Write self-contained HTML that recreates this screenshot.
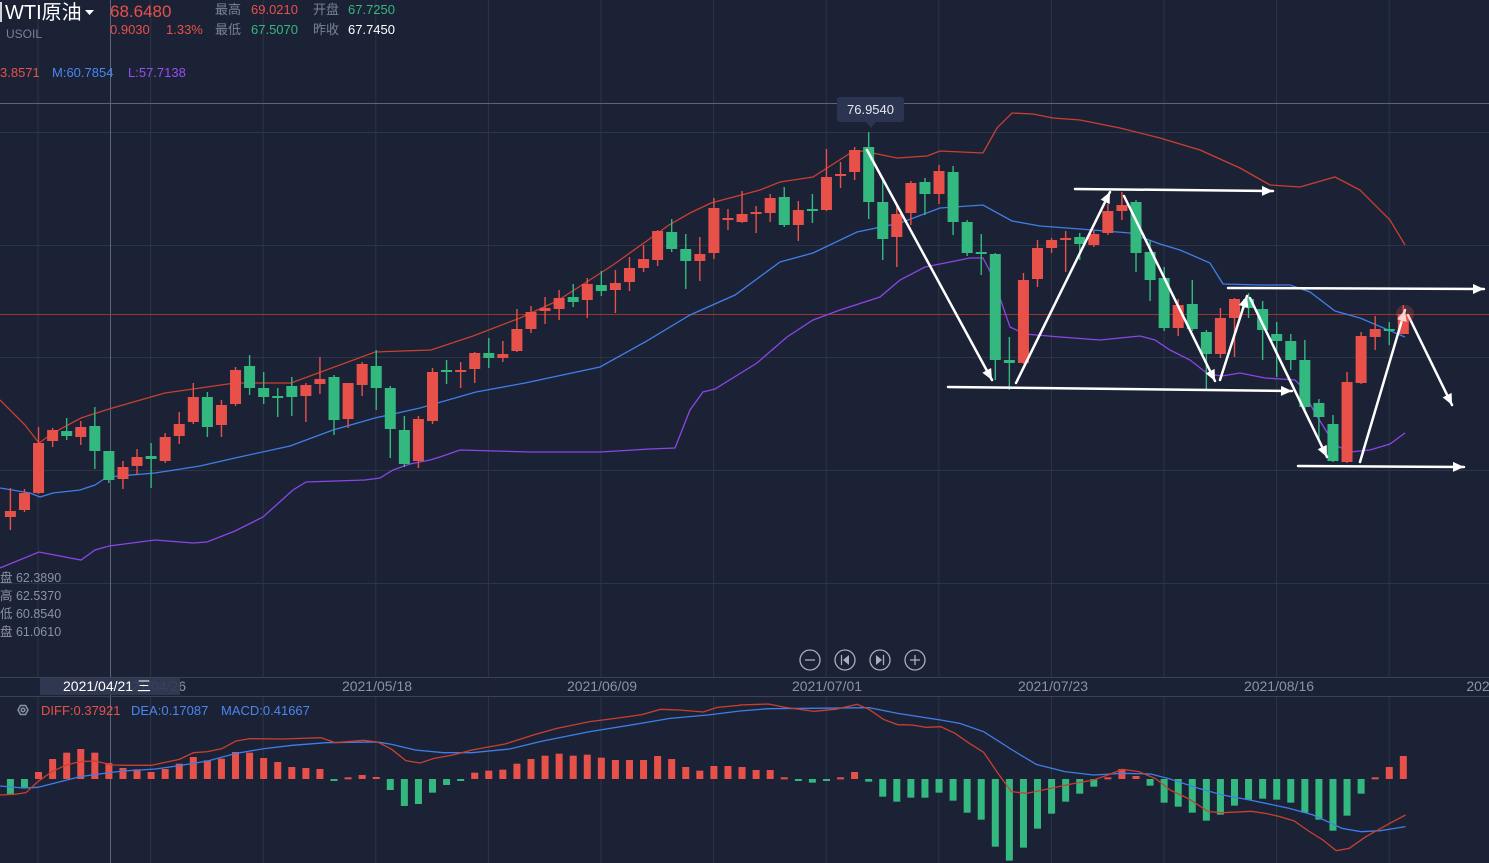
<!DOCTYPE html>
<html><head><meta charset="utf-8"><style>
html,body{margin:0;padding:0;background:#1c2235;width:1489px;height:863px;overflow:hidden;font-family:"Liberation Sans","Noto Sans CJK SC",sans-serif}
svg{position:absolute;left:0;top:0}
</style></head><body>
<svg id="s" width="1489" height="863" xmlns="http://www.w3.org/2000/svg">
<rect width="1489" height="863" fill="#1c2235"/>
<g id="grid" stroke="#2c3447" stroke-width="1"></g>
<line x1="0" y1="103.5" x2="1489" y2="103.5" stroke="#5d6478"/>
<line x1="110.5" y1="0" x2="110.5" y2="863" stroke="#5d6478"/>
<line x1="0" y1="314.5" x2="1489" y2="314.5" stroke="#9a3530"/>
<line x1="0" y1="677.5" x2="1489" y2="677.5" stroke="#3a4256"/>
<line x1="0" y1="696.5" x2="1489" y2="696.5" stroke="#3a4256"/>
<g id="bands" fill="none" stroke-width="1.3"></g>
<g id="candles"></g>
<g id="macd"></g>
<g id="arrows" stroke="#fff" fill="#fff" stroke-linecap="round"></g>
<circle cx="1405" cy="314" r="9" fill="#e8504a" opacity="0.25"/>
<rect x="837" y="97" width="67" height="25" rx="3" fill="#2b3450"/>
<polygon points="866,122 876,122 871,128" fill="#2b3450"/>
<text x="870.5" y="114" fill="#e6e8ee" font-size="13" text-anchor="middle">76.9540</text>
<rect x="0" y="2" width="2" height="20" fill="#cfd3dc"/>
<text x="5" y="19" fill="#fff" font-size="20">WTI原油</text>
<polygon points="85,10 94,10 89.5,15" fill="#fff"/>
<text x="6" y="38" fill="#7a8296" font-size="12">USOIL</text>
<text x="110" y="17" fill="#e8504a" font-size="17">68.6480</text>
<text x="110" y="34" fill="#e8504a" font-size="13">0.9030</text>
<text x="166" y="34" fill="#e8504a" font-size="13">1.33%</text>
<text x="215" y="14" fill="#7a8296" font-size="13">最高</text>
<text x="251" y="14" fill="#e8504a" font-size="13">69.0210</text>
<text x="313" y="14" fill="#7a8296" font-size="13">开盘</text>
<text x="348" y="14" fill="#33b97f" font-size="13">67.7250</text>
<text x="215" y="34" fill="#7a8296" font-size="13">最低</text>
<text x="251" y="34" fill="#33b97f" font-size="13">67.5070</text>
<text x="313" y="34" fill="#7a8296" font-size="13">昨收</text>
<text x="348" y="34" fill="#fff" font-size="13">67.7450</text>
<text x="0" y="77" fill="#e8504a" font-size="13">3.8571</text>
<text x="52" y="77" fill="#4a86f0" font-size="13">M:60.7854</text>
<text x="128" y="77" fill="#9a4df0" font-size="13">L:57.7138</text>
<g fill="#8a92a6" font-size="12.5">
<text x="0" y="582">盘 62.3890</text>
<text x="0" y="600">高 62.5370</text>
<text x="0" y="618">低 60.8540</text>
<text x="0" y="636">盘 61.0610</text>
</g>
<g stroke="#a8afbf" fill="none" stroke-width="1.3">
<circle cx="810" cy="660" r="10"/><line x1="805" y1="660" x2="815" y2="660"/>
<circle cx="845" cy="660" r="10"/><line x1="841.5" y1="655" x2="841.5" y2="665"/><polygon points="849,655 849,665 843,660" fill="#a8afbf" stroke="none"/>
<circle cx="880" cy="660" r="10"/><line x1="883.5" y1="655" x2="883.5" y2="665"/><polygon points="876,655 876,665 882,660" fill="#a8afbf" stroke="none"/>
<circle cx="915" cy="660" r="10"/><line x1="910" y1="660" x2="920" y2="660"/><line x1="915" y1="655" x2="915" y2="665"/>
</g>
<g fill="#8a92a6" font-size="14" text-anchor="middle">
<text x="151" y="691">2021/04/26</text>
<text x="377" y="691">2021/05/18</text>
<text x="602" y="691">2021/06/09</text>
<text x="827" y="691">2021/07/01</text>
<text x="1053" y="691">2021/07/23</text>
<text x="1279" y="691">2021/08/16</text>
<text x="1478" y="691">202</text>
</g>
<rect x="40" y="678" width="140" height="17" fill="#323a52" opacity="0.92"/>
<text x="63" y="691" fill="#fff" font-size="14">2021/04/21 三</text>
<g stroke="#8a92a6" fill="none" stroke-width="1.5"><polygon points="18,710 20.5,705.5 25.5,705.5 28,710 25.5,714.5 20.5,714.5"/><circle cx="23" cy="710" r="1.8"/></g>
<text x="41" y="715" fill="#e8504a" font-size="13">DIFF:0.37921</text>
<text x="131" y="715" fill="#4a86f0" font-size="13">DEA:0.17087</text>
<text x="221" y="715" fill="#4a86f0" font-size="13">MACD:0.41667</text>
</svg>
<script>
var NS="http://www.w3.org/2000/svg";
function el(p,t,a){var e=document.createElementNS(NS,t);for(var k in a)e.setAttribute(k,a[k]);p.appendChild(e);return e;}
var g=document.getElementById('grid');
for(var i=0;i<13;i++){var x=38+112.6*i;el(g,'line',{x1:x,y1:0,x2:x,y2:677});el(g,'line',{x1:x,y1:697,x2:x,y2:863});}
[132,245,357,470,583].forEach(function(y){el(g,'line',{x1:0,y1:y+.5,x2:1489,y2:y+.5});});
var R="#e8504a",G="#33b97f";
var C=[[10,511,517,488,530,R],[25,493,510,489,512,R],[39,443,493,427,494,R],[53,430,441,428,447,R],[67,431,436,418,440,G],[81,427,437,421,445,R],[95,426,451,407,469,G],[109,451,480,451,483,G],[123,467,479,461,489,R],[137,457,466,449,475,R],[151,456,459,443,488,G],[165,437,461,433,463,R],[179,424,436,412,444,R],[193,397,422,383,424,R],[207,397,427,392,437,G],[221,405,425,400,437,R],[235,370,404,367,406,R],[249,366,388,355,395,G],[263,388,397,372,404,G],[277,396,397,388,417,G],[291,386,397,377,416,G],[305,385,396,383,422,R],[319,379,384,357,394,R],[333,377,420,375,435,G],[347,383,419,383,428,R],[361,364,385,362,396,R],[375,366,388,350,410,G],[389,388,429,386,458,G],[403,430,464,416,467,G],[417,419,461,416,468,R],[431,372,421,368,424,R],[445,370,372,360,384,G],[459,370,372,362,388,R],[473,353,369,352,383,R],[487,353,358,338,368,G],[501,354,358,341,362,R],[515,329,351,309,352,R],[529,312,329,306,333,R],[543,308,311,297,324,R],[557,298,309,290,320,R],[571,297,302,284,307,G],[585,284,300,278,318,R],[599,285,291,271,296,G],[613,283,290,270,313,R],[627,268,282,257,291,R],[641,259,268,245,272,R],[655,231,260,230,266,R],[669,232,249,219,252,G],[683,249,261,234,289,G],[697,254,261,237,281,R],[711,208,253,198,259,R],[725,218,219,209,230,R],[739,214,222,191,223,R],[753,212,213,206,233,R],[767,198,213,194,222,R],[781,197,225,187,227,G],[796,210,225,201,241,R],[810,209,210,194,223,G],[824,177,210,149,211,R],[838,174,176,162,188,R],[852,150,172,147,180,R],[866,147,202,132,219,G],[880,202,239,178,260,G],[894,214,237,205,267,R],[908,183,213,181,225,R],[922,182,194,178,215,G],[936,171,194,165,204,R],[950,172,222,166,235,G],[964,222,253,220,256,G],[978,252,254,234,275,G],[992,254,360,253,380,G],[1006,360,363,337,390,G],[1020,280,363,273,364,R],[1034,248,279,240,287,R],[1048,240,248,238,253,R],[1062,238,239,231,272,R],[1076,237,244,233,260,G],[1090,234,245,231,247,R],[1104,211,233,204,235,R],[1118,205,211,192,220,R],[1132,202,253,200,272,G],[1146,252,280,240,301,G],[1160,278,328,267,331,G],[1174,305,328,299,336,R],[1188,304,329,280,331,G],[1202,332,354,330,389,G],[1216,318,354,308,358,R],[1230,299,318,298,357,R],[1244,299,308,293,318,G],[1258,309,330,301,360,G],[1272,334,341,322,377,G],[1286,341,360,334,370,G],[1300,360,407,340,410,G],[1314,403,417,399,440,G],[1328,424,461,415,462,G],[1343,382,462,372,463,R],[1357,336,383,332,384,R],[1371,329,337,316,350,R],[1385,329,331,322,345,G],[1399,314,334,305,334,R]];
var cg=document.getElementById('candles');
C.forEach(function(c,i){var x=10.4+14.07*i;el(cg,'line',{x1:x,y1:c[3],x2:x,y2:c[4],stroke:c[5],'stroke-width':1.4});var h=Math.max(c[2]-c[1],2);el(cg,'rect',{x:x-5.5,y:c[1],width:11,height:h,fill:c[5]});});
function pl(gr,pts,col,w){el(gr,'polyline',{points:pts.map(function(p){return p.join(',')}).join(' '),stroke:col,'stroke-width':w||1.3,fill:'none'});}
var b=document.getElementById('bands');
pl(b,[[0,400],[25,425],[39,443],[53,433],[81,418],[109,409],[165,393],[235,383],[291,383],[375,352],[431,350],[473,336],[520,318],[557,301],[613,265],[669,225],[690,213],[711,203],[760,190],[780,182],[813,177],[852,152],[863,151],[897,158],[927,156],[940,151],[983,153],[997,128],[1012,113],[1033,114],[1053,118],[1080,120],[1120,128],[1160,138],[1200,150],[1240,168],[1270,185],[1300,187],[1335,177],[1360,190],[1390,220],[1405,245]],"#c8402f");
pl(b,[[0,488],[30,493],[40,497],[53,493],[80,490],[95,485],[107,477],[155,473],[200,466],[235,458],[290,446],[333,430],[375,418],[420,408],[476,392],[525,383],[600,367],[645,342],[690,315],[735,295],[780,262],[813,253],[857,232],[900,223],[940,208],[983,205],[1012,221],[1040,226],[1080,229],[1130,233],[1160,244],[1180,250],[1210,263],[1223,284],[1260,285],[1290,285],[1310,292],[1335,311],[1360,318],[1405,337]],"#3f7ee8");
pl(b,[[0,568],[39,552],[81,560],[95,550],[109,546],[155,540],[193,543],[207,542],[235,531],[263,517],[293,490],[306,482],[365,480],[380,478],[393,470],[410,464],[430,460],[440,457],[460,450],[530,452],[600,452],[650,449],[675,448],[690,410],[703,392],[715,389],[757,363],[787,337],[813,320],[840,310],[880,297],[900,280],[925,267],[970,258],[983,258],[992,275],[1010,327],[1025,334],[1060,337],[1100,340],[1140,336],[1155,340],[1170,350],[1190,360],[1208,374],[1222,376],[1240,373],[1265,378],[1295,380],[1300,385],[1315,413],[1335,445],[1350,452],[1370,450],[1390,444],[1405,433]],"#8b45e6");
var M=[283,263,216,177,158,147,158,189,204,208,216,207,191,171,181,176,156,158,174,186,201,204,207,242,232,225,231,270,318,312,278,255,243,218,212,209,191,177,167,161,167,164,173,180,180,180,168,177,201,212,198,198,201,210,210,232,242,248,242,232,216,245,290,305,293,293,278,302,338,359,440,482,443,386,341,305,281,260,232,207,228,257,308,320,338,362,344,317,299,296,299,308,338,359,392,347,281,232,201,168];
var mg=document.getElementById('macd');var z=779;
M.forEach(function(v,i){var x=10.4+14.07*i;var y=700+v/3;var col=v<237?R:G;var t=Math.min(y,z),h=Math.max(Math.abs(y-z),2);el(mg,'rect',{x:x-3.5,y:t,width:7,height:h,fill:col});});
function cv(a,ox,sx){return a.map(function(p){return [p[0]/sx+ox,700+p[1]/3]});}
var d1=cv([[0,285],[30,283],[55,278],[80,245],[110,215],[140,195],[170,185],[200,183],[240,195],[270,196],[320,196],[380,178],[410,158],[440,155],[470,146],[500,123],[530,116],[600,117],[680,113],[710,128],[770,121],[800,126],[830,148],[860,182],[890,189],[920,175],[960,165],[1000,150],[1070,132],[1130,105],[1180,85],[1250,65],[1300,56],[1360,44],[1400,28],[1440,30],[1490,36],[1520,22],[1568,16]],0,2.119).concat(cv([[0,15],[60,12],[95,22],[155,34],[200,28],[245,13],[270,28],[300,58],[330,74],[360,75],[390,82],[420,80],[450,100],[480,130],[510,157],[540,220],[568,275],[600,280],[640,268],[700,250],[740,240],[770,225],[800,208],[835,215],[870,236],[900,270],[940,297],[980,335],[1010,338],[1070,334],[1100,340],[1130,350],[1160,363],[1190,393],[1220,420],[1248,452],[1275,445],[1310,410],[1360,370],[1393,345]],740,2.093));
var d2=cv([[0,258],[50,264],[80,262],[120,248],[170,230],[210,222],[260,213],[330,207],[380,197],[440,183],[500,160],[560,146],[620,136],[690,128],[800,126],[830,133],[880,150],[940,158],[1000,158],[1080,147],[1150,123],[1250,95],[1350,72],[1420,55],[1500,45],[1568,33]],0,2.119).concat(cv([[0,33],[60,26],[150,25],[270,23],[330,40],[420,60],[460,70],[510,95],[570,150],[620,193],[680,215],[740,225],[800,220],[860,222],[900,237],[960,265],[1010,285],[1060,298],[1150,325],[1200,345],[1260,385],[1300,395],[1340,392],[1393,380]],740,2.093));
pl(mg,d2,"#3f7ee8",1.3);pl(mg,d1,"#c8402f",1.3);
var ag=document.getElementById('arrows');
function arr(x1,y1,x2,y2,w){el(ag,'line',{x1:x1,y1:y1,x2:x2,y2:y2,'stroke-width':w||2.5});var a=Math.atan2(y2-y1,x2-x1),L=11,W=5;var bx=x2-L*Math.cos(a),by=y2-L*Math.sin(a);var px=-Math.sin(a)*W,py=Math.cos(a)*W;el(ag,'polygon',{points:x2+','+y2+' '+(bx+px)+','+(by+py)+' '+(bx-px)+','+(by-py),stroke:'none'});}
arr(948,387,1292,391,2.5);arr(1075,189,1273,191,2.5);arr(1228,288,1484,289,2.5);arr(1298,466,1464,467,2.5);
arr(867,150,992,380,2.5);arr(1016,383,1110,192,2.5);arr(1124,196,1215,381,2.5);arr(1220,380,1247,296,2.5);arr(1250,298,1327,457,2.5);arr(1360,462,1405,310,2.5);arr(1408,315,1452,405,2.5);
</script>
</body></html>
